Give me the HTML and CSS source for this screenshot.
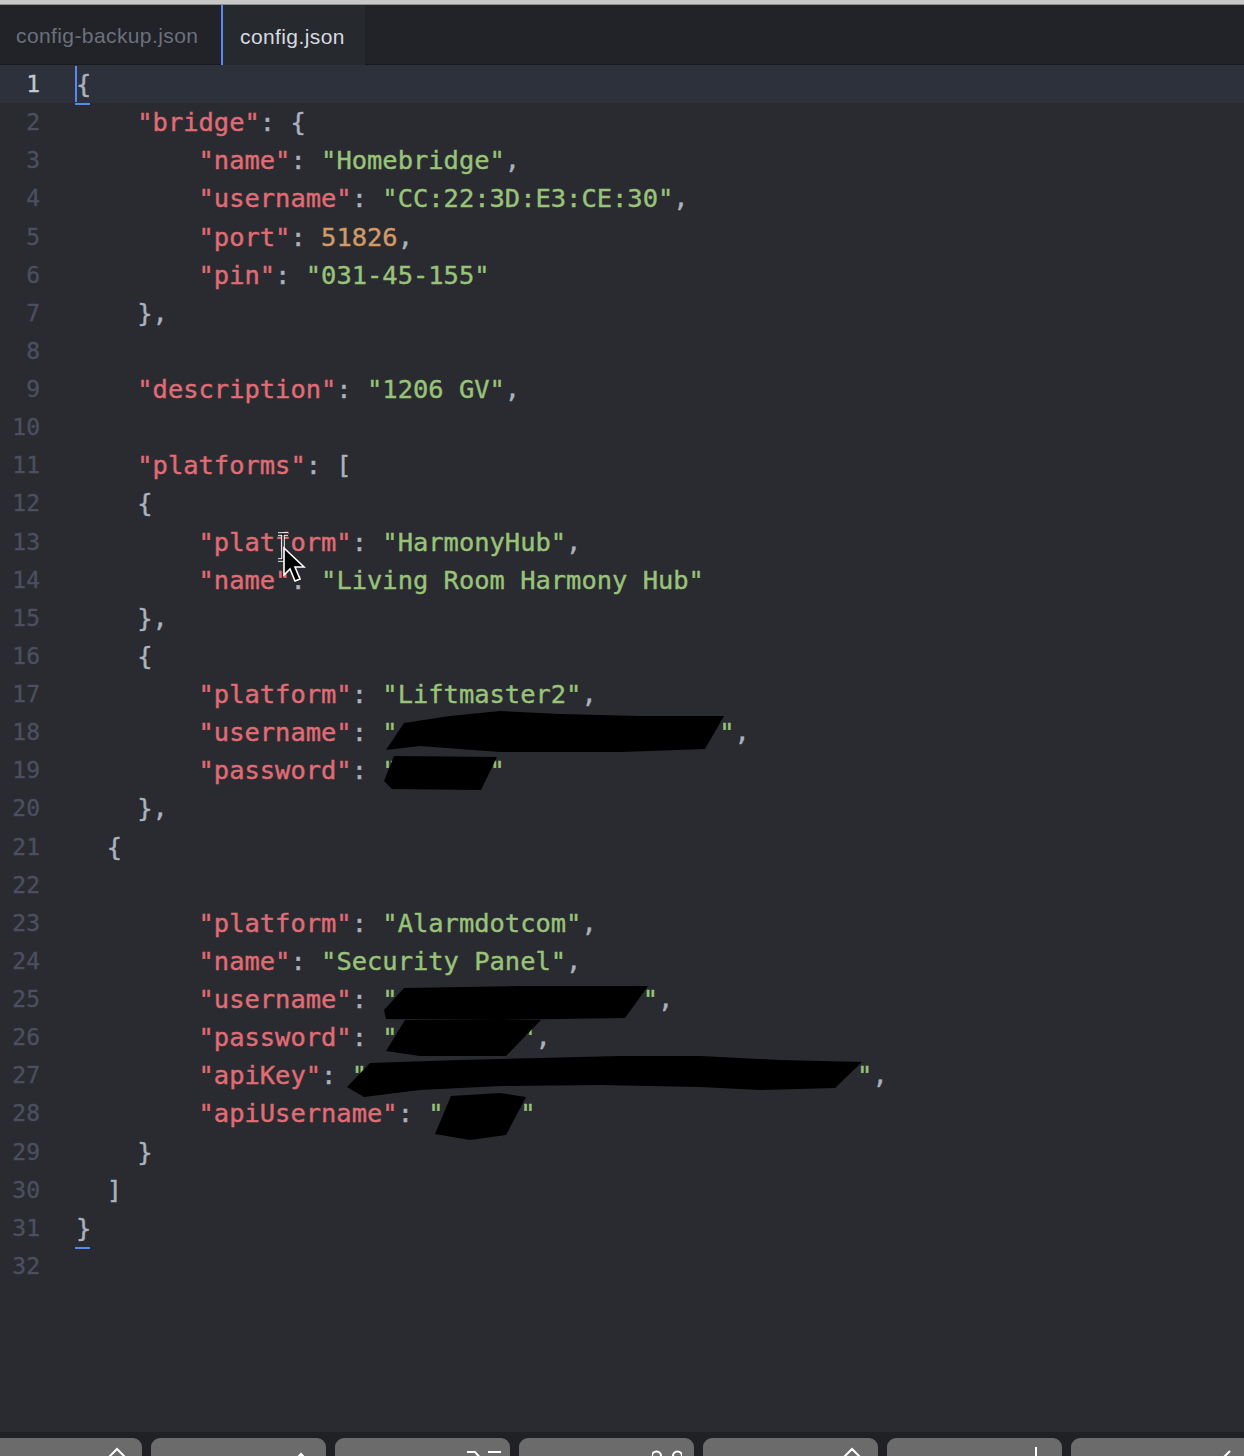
FILE: index.html
```html
<!DOCTYPE html>
<html lang="en">
<head>
    <meta charset="UTF-8">
    <title>config.json</title>
    <link rel="stylesheet" href="styles.css">
</head>
<body>
    <div class="topstrip"></div>
    <div class="tabs">
        <div class="tab">config-backup.json</div>
        <div class="tab active">config.json</div>
    </div>

    <div class="editor">
        <div class="row current"><span class="ln">1</span><span class="code"><span class="p brace-open">{</span></span></div>
        <div class="row"><span class="ln">2</span><span class="code">    <span class="k">"bridge"</span><span class="p">: {</span></span></div>
        <div class="row"><span class="ln">3</span><span class="code">        <span class="k">"name"</span><span class="p">: </span><span class="s">"Homebridge"</span><span class="p">,</span></span></div>
        <div class="row"><span class="ln">4</span><span class="code">        <span class="k">"username"</span><span class="p">: </span><span class="s">"CC:22:3D:E3:CE:30"</span><span class="p">,</span></span></div>
        <div class="row"><span class="ln">5</span><span class="code">        <span class="k">"port"</span><span class="p">: </span><span class="n">51826</span><span class="p">,</span></span></div>
        <div class="row"><span class="ln">6</span><span class="code">        <span class="k">"pin"</span><span class="p">: </span><span class="s">"031-45-155"</span></span></div>
        <div class="row"><span class="ln">7</span><span class="code">    <span class="p">},</span></span></div>
        <div class="row"><span class="ln">8</span><span class="code"></span></div>
        <div class="row"><span class="ln">9</span><span class="code">    <span class="k">"description"</span><span class="p">: </span><span class="s">"1206 GV"</span><span class="p">,</span></span></div>
        <div class="row"><span class="ln">10</span><span class="code"></span></div>
        <div class="row"><span class="ln">11</span><span class="code">    <span class="k">"platforms"</span><span class="p">: [</span></span></div>
        <div class="row"><span class="ln">12</span><span class="code">    <span class="p">{</span></span></div>
        <div class="row"><span class="ln">13</span><span class="code">        <span class="k">"platform"</span><span class="p">: </span><span class="s">"HarmonyHub"</span><span class="p">,</span></span></div>
        <div class="row"><span class="ln">14</span><span class="code">        <span class="k">"name"</span><span class="p">: </span><span class="s">"Living Room Harmony Hub"</span></span></div>
        <div class="row"><span class="ln">15</span><span class="code">    <span class="p">},</span></span></div>
        <div class="row"><span class="ln">16</span><span class="code">    <span class="p">{</span></span></div>
        <div class="row"><span class="ln">17</span><span class="code">        <span class="k">"platform"</span><span class="p">: </span><span class="s">"Liftmaster2"</span><span class="p">,</span></span></div>
        <div class="row"><span class="ln">18</span><span class="code">        <span class="k">"username"</span><span class="p">: </span><span class="s">"                     "</span><span class="p">,</span></span></div>
        <div class="row"><span class="ln">19</span><span class="code">        <span class="k">"password"</span><span class="p">: </span><span class="s">"      "</span></span></div>
        <div class="row"><span class="ln">20</span><span class="code">    <span class="p">},</span></span></div>
        <div class="row"><span class="ln">21</span><span class="code">  <span class="p">{</span></span></div>
        <div class="row"><span class="ln">22</span><span class="code"></span></div>
        <div class="row"><span class="ln">23</span><span class="code">        <span class="k">"platform"</span><span class="p">: </span><span class="s">"Alarmdotcom"</span><span class="p">,</span></span></div>
        <div class="row"><span class="ln">24</span><span class="code">        <span class="k">"name"</span><span class="p">: </span><span class="s">"Security Panel"</span><span class="p">,</span></span></div>
        <div class="row"><span class="ln">25</span><span class="code">        <span class="k">"username"</span><span class="p">: </span><span class="s">"                "</span><span class="p">,</span></span></div>
        <div class="row"><span class="ln">26</span><span class="code">        <span class="k">"password"</span><span class="p">: </span><span class="s">"        "</span><span class="p">,</span></span></div>
        <div class="row"><span class="ln">27</span><span class="code">        <span class="k">"apiKey"</span><span class="p">: </span><span class="s">"                                "</span><span class="p">,</span></span></div>
        <div class="row"><span class="ln">28</span><span class="code">        <span class="k">"apiUsername"</span><span class="p">: </span><span class="s">"     "</span></span></div>
        <div class="row"><span class="ln">29</span><span class="code">    <span class="p">}</span></span></div>
        <div class="row"><span class="ln">30</span><span class="code">  <span class="p">]</span></span></div>
        <div class="row"><span class="ln">31</span><span class="code"><span class="p brace-match">}</span></span></div>
        <div class="row"><span class="ln">32</span><span class="code"></span></div>
    </div>

    <div class="keys">
        <div class="key key-ctrl"><svg width="20" height="12" viewBox="0 0 20 12"><path d="M2 10 L10 2 L18 10" fill="none" stroke="#fff" stroke-width="2"/></svg></div>
        <div class="key key-fn"><svg width="10" height="6" viewBox="0 0 10 6"><path d="M1 6 L5 2 L9 6" fill="none" stroke="#fff" stroke-width="2"/></svg></div>
        <div class="key key-opt"><svg width="36" height="12" viewBox="0 0 36 12"><path d="M1 3 H9 L17 12 M22 3 H35" fill="none" stroke="#fff" stroke-width="2"/></svg></div>
        <div class="key key-cmd"><svg width="30" height="12" viewBox="0 0 30 12"><path d="M9 12 V7 A4.5 4.5 0 1 0 4.5 11.5 M21 12 V7 A4.5 4.5 0 1 1 25.5 11.5" fill="none" stroke="#fff" stroke-width="2"/></svg></div>
        <div class="key key-shift"><svg width="30" height="14" viewBox="0 0 30 14"><path d="M3 14 L15 2 L27 14 M9 14 V12 M21 14 V12" fill="none" stroke="#fff" stroke-width="2"/></svg></div>
        <div class="key key-bar"><svg width="4" height="14" viewBox="0 0 4 14"><path d="M2 0 V14" fill="none" stroke="#fff" stroke-width="2"/></svg></div>
        <div class="key key-slash"><svg width="14" height="10" viewBox="0 0 14 10"><path d="M13 1 L4 10" fill="none" stroke="#fff" stroke-width="2"/></svg></div>
    </div>

    <!-- redaction marks and mouse pointer drawn over the text -->
    <svg class="overlay" width="1244" height="1456" viewBox="0 0 1244 1456">
        <g fill="#000">
            <path d="M386 750 L404 723 L450 716 L500 711 L560 714 L640 716 L724 716 L705 749 L620 752 L500 752 L420 746 Z"/>
            <path d="M394 756 L497 757 L481 790 L392 789 L384 781 Z"/>
            <path d="M404 988 L520 986 L648 986 L625 1018 L500 1020 L386 1019 L384 1010 Z"/>
            <path d="M405 1020 L541 1020 L506 1056 L420 1056 L386 1051 Z"/>
            <path d="M347 1087 L370 1063 L460 1060 L540 1058 L620 1056 L700 1056 L780 1060 L862 1062 L835 1088 L760 1090 L700 1087 L600 1085 L500 1086 L420 1090 L364 1097 Z"/>
            <path d="M451 1096 L500 1093 L526 1097 L506 1135 L470 1140 L435 1134 Z"/>
        </g>
        <path d="M278 534 H288 M283 534 V560 M278 560 H288" fill="none" stroke="#fff" stroke-width="3.5"/>
        <path d="M278 534 H288 M283 534 V560 M278 560 H288" fill="none" stroke="#000" stroke-width="1.4"/>
        <path d="M284 548 L284 575 L290 569 L295 581 L300 579 L295 567 L304 567 Z" fill="#000" stroke="#fff" stroke-width="1.6"/>
    </svg>
</body>
</html>
```

FILE: styles.css
```css
:root {
    --editor-bg: #2a2b30;
    --tabbar-bg: #212328;
    --blue: #568af2;
    --key: #e06c75;
    --string: #98c379;
    --number: #d19a66;
    --punct: #abb2bf;
    --gutter: #4b5060;
}

* {
    box-sizing: border-box;
}

body {
    margin: 0;
    width: 1244px;
    height: 1456px;
    overflow: hidden;
    background: #202124;
    position: relative;
}

.topstrip {
    height: 5px;
    background: #c8c8c8;
    border-bottom: 1px solid #8f8f8f;
}

.tabs {
    display: flex;
    height: 60px;
    background: var(--tabbar-bg);
    border-bottom: 1px solid #181a1f;
    font-family: "Liberation Sans", Arial, sans-serif;
    font-size: 21px;
    letter-spacing: 0.4px;
}

.tab {
    width: 221px;
    padding: 3px 0 0 16px;
    display: flex;
    align-items: center;
    color: #6b717c;
}

.tab.active {
    width: 144px;
    padding-left: 17px;
    color: #d7dae0;
    background: #26292e;
    border-left: 2px solid var(--blue);
    margin-bottom: -1px;
}

.editor {
    height: 1367px;
    background: var(--editor-bg);
    font-family: "DejaVu Sans Mono", monospace;
}

.row {
    display: flex;
    height: 38.13px;
    align-items: center;
}

.row.current {
    background: #2c313b;
}

.ln {
    width: 40px;
    flex: none;
    text-align: right;
    font-size: 23px;
    color: var(--gutter);
    -webkit-text-stroke: 0.3px currentColor;
}

.current .ln {
    color: #c5c8ce;
}

.code {
    padding-left: 36px;
    font-size: 25.45px;
    white-space: pre;
    color: var(--punct);
    -webkit-text-stroke: 0.4px currentColor;
}

.k { color: var(--key); }
.s { color: var(--string); }
.n { color: var(--number); }
.p { color: var(--punct); }

.brace-open,
.brace-match {
    position: relative;
}

/* cursor bar and bracket-match underline */
.brace-open::before {
    content: "";
    position: absolute;
    left: -1px;
    top: -3px;
    width: 2px;
    height: 36px;
    background: var(--blue);
}

.brace-open::after,
.brace-match::after {
    content: "";
    position: absolute;
    left: -1px;
    right: 1px;
    bottom: -6px;
    height: 2px;
    background: var(--blue);
}

.keys {
    display: flex;
    gap: 9px;
    padding-top: 6px;
    height: 24px;
    background: #202124;
    overflow: hidden;
}

.key {
    height: 40px;
    width: 175px;
    flex: none;
    background: #6b6b6b;
    border-radius: 9px;
    display: flex;
    justify-content: flex-end;
    align-items: flex-start;
}

.key-ctrl {
    width: 142px;
    padding: 9px 15px 0 0;
    border-top-left-radius: 0;
}

.key-fn { padding: 14px 20px 0 0; }
.key-opt { padding: 11px 8px 0 0; }
.key-cmd { padding: 11px 12px 0 0; }
.key-shift { padding: 9px 11px 0 0; }
.key-bar { padding: 9px 24px 0 0; }
.key-slash { width: 180px; padding: 12px 20px 0 0; }

.overlay {
    position: absolute;
    top: 0;
    left: 0;
    pointer-events: none;
}
```
